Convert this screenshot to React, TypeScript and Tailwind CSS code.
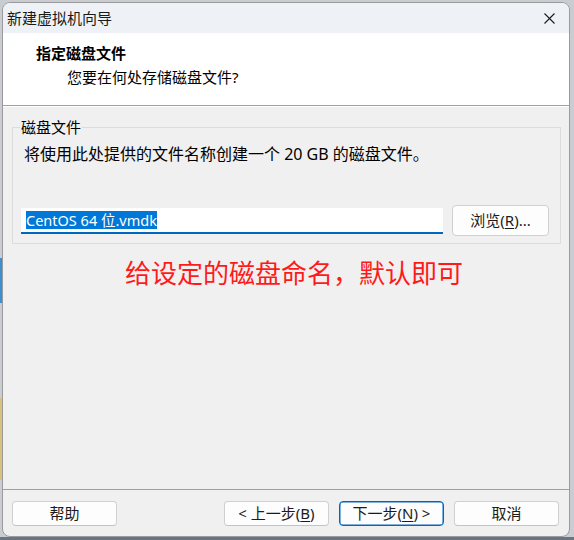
import React from "react";

const FONT = "font-['Noto_Sans','Noto_Sans_CJK_SC',sans-serif]";

function WinButton({
  children,
  primary = false,
}: {
  children: React.ReactNode;
  primary?: boolean;
}) {
  return (
    <button
      className={`flex h-[25px] w-[105px] items-center justify-center rounded-[4px] border bg-[#fdfdfd] text-[15px] leading-none text-[#1b1b1b] ${
        primary ? "border-[#0067c0] shadow-[inset_0_0_0_0.5px_#0067c0]" : "border-[#d0d0d0] border-b-[#c4c4c4]"
      }`}
    >
      {children}
    </button>
  );
}

export default function App() {
  return (
    <div className={`relative h-[540px] w-[574px] overflow-hidden bg-[#c9ccd1] ${FONT}`}>
      {/* desktop bits peeking out on the left */}
      <div className="absolute left-0 top-[258px] h-[45px] w-[2px] bg-[#3d8fd0]" />
      <div className="absolute left-0 top-[398px] h-[82px] w-[2px] bg-[#d6c27a]" />
      <div className="absolute bottom-0 left-0 h-[3px] w-full bg-[#6a7583]" />

      <div className="relative ml-[2px] mt-[2px] flex h-[535px] w-[568px] flex-col overflow-hidden rounded-[8px] border border-[#9b9b9b] bg-[#f0f0f0]">
        {/* title bar */}
        <div className="flex h-[30px] items-center justify-between bg-[#eef2f7] pl-[4px] pr-[14px]">
          <span className="text-[15px] leading-none text-[#1a1a1a]">新建虚拟机向导</span>
          <svg width="11" height="11" viewBox="0 0 11 11" className="mt-[1px]">
            <path d="M0.5 0.5 L10.5 10.5 M10.5 0.5 L0.5 10.5" stroke="#1a1a1a" strokeWidth="1.1" />
          </svg>
        </div>

        {/* header */}
        <div className="h-[73px] border-b border-[#a0a0a0] bg-white pl-[33px] pt-[10px]">
          <div className="text-[15px] font-bold leading-[20px] text-black">指定磁盘文件</div>
          <div className="mt-[4px] pl-[31px] text-[15px] leading-[20px] text-black">
            您要在何处存储磁盘文件?
          </div>
        </div>

        {/* body */}
        <div className="flex-1 border-t border-white pl-[9px] pr-[8px] pt-[20px]">
          <div className="relative h-[117px] border border-[#dcdcdc] pl-[8px] pr-[10px] pt-[16px]">
            <span className="absolute left-[7px] top-[-11px] bg-[#f0f0f0] px-[1px] text-[15px] leading-[20px] text-black">
              磁盘文件
            </span>
            <div className="ml-[3px] text-[16px] leading-[20px] text-black">
              将使用此处提供的文件名称创建一个 20 GB 的磁盘文件。
            </div>
            <div className="mt-[41px] flex items-center gap-[9px]">
              <div className="flex h-[26px] w-[422px] items-center border-b-2 border-[#0067c0] bg-white pl-[5px]">
                <span className="bg-[#0078d7] text-[14.5px] leading-[18px] text-white">CentOS 64 位.vmdk</span>
              </div>
              <button className="flex h-[31px] w-[97px] items-center justify-center rounded-[4px] border border-[#d0d0d0] bg-[#fdfdfd] text-[15px] leading-none text-[#1b1b1b]">
                浏览(<span className="underline underline-offset-2">R</span>)...
              </button>
            </div>
          </div>
          <div className="mt-[13px] pl-[113px] text-[26px] leading-[32px] text-[#ff1a1a]">
            给设定的磁盘命名，默认即可
          </div>
        </div>

        {/* footer */}
        <div className="flex h-[47px] items-start justify-between border-t border-[#a0a0a0] pl-[9px] pr-[10px] pt-[11px]">
          <WinButton>帮助</WinButton>
          <div className="flex gap-[10px]">
            <WinButton>
              &lt; 上一步(<span className="underline underline-offset-2">B</span>)
            </WinButton>
            <WinButton primary>
              下一步(<span className="underline underline-offset-2">N</span>) &gt;
            </WinButton>
            <WinButton>取消</WinButton>
          </div>
        </div>
      </div>
    </div>
  );
}
